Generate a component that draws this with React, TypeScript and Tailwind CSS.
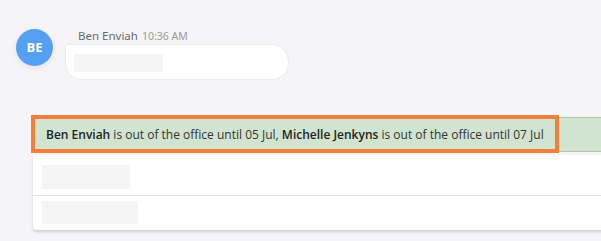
import React from 'react';

const Placeholder: React.FC<{ w: string; h: string }> = ({ w, h }) => (
  <div className={`${w} ${h} bg-[#f5f5f5]`} />
);

const App: React.FC = () => {
  return (
    <div className="relative w-[601px] h-[241px] overflow-hidden bg-[#f5f5f7] font-['Noto_Sans',sans-serif]">
      {/* Message */}
      <div className="flex pt-[29px] pl-[16px]">
        <div className="w-[37px] h-[37px] shrink-0 rounded-full bg-[#56a0f4] shadow-[0_2px_6px_rgba(0,0,0,0.08)] flex items-center justify-center text-white font-bold text-[13px] font-['Open_Sans',sans-serif]">
          BE
        </div>
        <div className="ml-[12px] flex flex-col">
          <div className="pl-[13px] h-[15px] flex items-baseline gap-[4px] -mt-[1px] leading-[15px]">
            <span className="text-[11.5px] text-[#6b6b6b]">Ben Enviah</span>
            <span className="text-[10.5px] text-[#9a9a9a]">10:36 AM</span>
          </div>
          <div className="mt-[1px] w-[224px] h-[36px] bg-white rounded-[17px] rounded-tl-[3px] border border-[#ececee] pl-[8px] pt-[9px]">
            <Placeholder w="w-[89px]" h="h-[18px]" />
          </div>
        </div>
      </div>

      {/* Out of office banner */}
      <div className="mt-[37px] ml-[33px] h-[35px] bg-[#d0e4cf] border-y border-[#a9cca3] flex items-center pl-[13px] text-[12px] text-[#333] whitespace-nowrap font-['Open_Sans',sans-serif]">
        <span>
          <b className="font-semibold text-[#222]">Ben Enviah</b> is out of the office until 05 Jul,{' '}
          <b className="font-semibold text-[#222]">Michelle Jenkyns</b> is out of the office until 07 Jul
        </span>
      </div>

      {/* Card */}
      <div className="mt-[3px] ml-[33px] w-[600px] bg-white rounded-b-[4px] shadow-[0_2px_3px_rgba(0,0,0,0.15)]">
        <div className="h-[41px] pl-[9px] pt-[10px] border-b border-[#e6e6e6]">
          <Placeholder w="w-[88px]" h="h-[24px]" />
        </div>
        <div className="h-[34px] pl-[9px] pt-[5px]">
          <Placeholder w="w-[96px]" h="h-[23px]" />
        </div>
      </div>

      {/* Highlight overlay */}
      <div className="absolute left-[31px] top-[115px] w-[528px] h-[38px] border-4 border-[#f47f3b]" />
    </div>
  );
};

export default App;
